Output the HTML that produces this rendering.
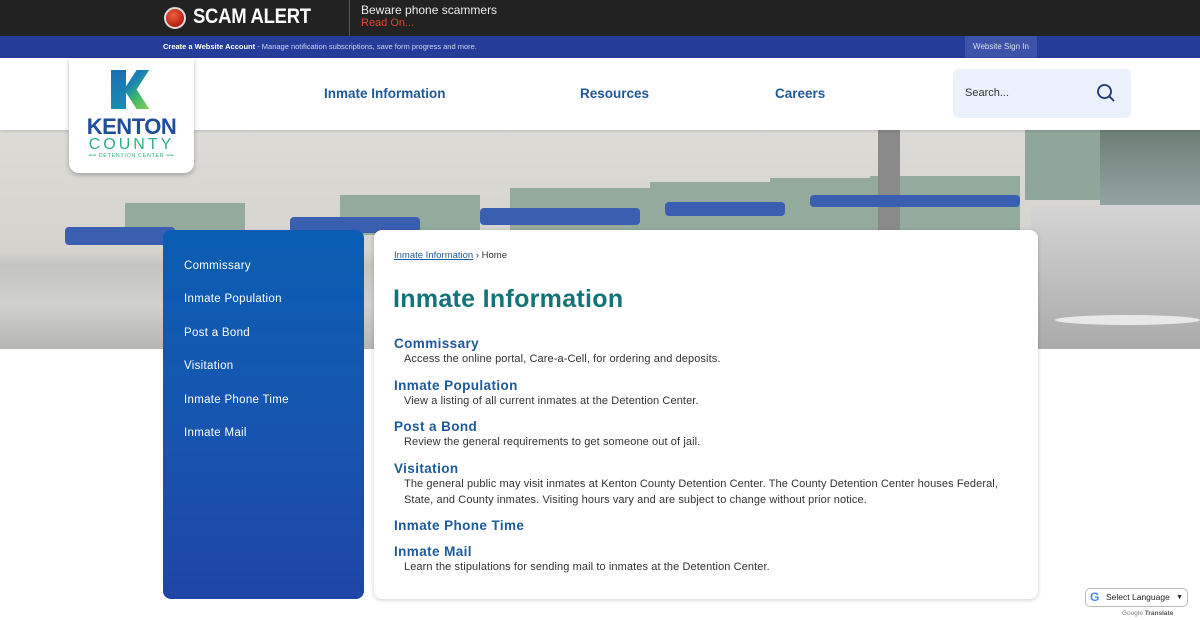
<!DOCTYPE html>
<html><head><meta charset="utf-8"><style>
*{margin:0;padding:0;box-sizing:border-box}
body{width:1200px;height:620px;overflow:hidden;background:#fff;font-family:"Liberation Sans",sans-serif;position:relative}
.abs{position:absolute}
#top{left:0;top:0;width:1200px;height:36px;background:#222}
#acct{left:0;top:36px;width:1200px;height:22px;background:#263c9a}
#hero{left:0;top:130px;width:1200px;height:219px;overflow:hidden;background:linear-gradient(180deg,#dcdbd6 0%,#d4d3ce 55%,#c4c4c0 62%,#d0d0cd 80%,#b5b5b2 100%)}
.g{position:absolute;background:#93aa9d}
.b{position:absolute;background:#3a5fb0;border-radius:4px}
.side a{display:block;color:#fff;font-size:11.5px;position:absolute;left:21px;letter-spacing:.3px}
h3{position:absolute;left:20px;color:#1e5a99;font-size:13.5px;font-weight:bold;letter-spacing:.4px}
.d{position:absolute;left:30px;color:#333;font-size:11px;line-height:15.5px;width:610px;letter-spacing:.1px}
</style></head><body>
<div class="abs" id="top">
  <div class="abs" style="left:164px;top:7px;width:22px;height:22px;border-radius:50%;background:radial-gradient(circle at 40% 35%,#f06040,#b81f10 70%);border:2px solid #ddd"></div>
  <div class="abs" style="left:193px;top:5px;color:#fff;font-size:21px;font-weight:bold;letter-spacing:-.3px;transform:scaleX(.88);transform-origin:left">SCAM ALERT</div>
  <div class="abs" style="left:349px;top:0;width:1px;height:36px;background:#555"></div>
  <div class="abs" style="left:361px;top:3px;color:#eee;font-size:12px">Beware phone scammers</div>
  <div class="abs" style="left:361px;top:17px;color:#e0462a;font-size:11px">Read On...</div>
</div>
<div class="abs" id="acct">
  <div class="abs" style="left:163px;top:6px;color:#fff;font-size:7.5px"><b>Create a Website Account</b><span style="color:#cfd6ee"> - Manage notification subscriptions, save form progress and more.</span></div>
  <div class="abs" style="left:965px;top:0;width:72px;height:22px;background:#3d52a8;color:#dde;font-size:8px;line-height:22px;text-align:center">Website Sign In</div>
</div>
<div class="abs" id="hero">
  <div class="g" style="left:125px;top:73px;width:120px;height:40px"></div>
  <div class="g" style="left:340px;top:65px;width:140px;height:40px"></div>
  <div class="g" style="left:510px;top:58px;width:155px;height:45px"></div>
  <div class="g" style="left:650px;top:52px;width:160px;height:50px"></div>
  <div class="g" style="left:770px;top:48px;width:155px;height:55px"></div>
  <div class="g" style="left:870px;top:46px;width:150px;height:55px"></div>
  <div class="g" style="left:1025px;top:0;width:75px;height:70px;background:#8fa79b"></div>
  <div class="abs" style="left:1100px;top:0;width:100px;height:219px;background:linear-gradient(180deg,#6d7e76,#9aa 40%,#bbb)"></div>
  <div class="abs" style="left:878px;top:0;width:22px;height:100px;background:#8a8a8a"></div>
  <div class="b" style="left:65px;top:97px;width:110px;height:18px"></div>
  <div class="b" style="left:290px;top:87px;width:130px;height:16px"></div>
  <div class="b" style="left:480px;top:78px;width:160px;height:17px"></div>
  <div class="b" style="left:665px;top:72px;width:120px;height:14px"></div>
  <div class="b" style="left:810px;top:65px;width:210px;height:12px"></div>
  <div class="abs" style="left:1030px;top:75px;width:170px;height:144px;background:linear-gradient(180deg,#d5d5d5,#aaa)"></div>
  <div class="abs" style="left:1055px;top:185px;width:145px;height:10px;background:#e8e8e8;border-radius:50%"></div>
</div>
<div class="abs" style="left:0;top:58px;width:1200px;height:72px;background:#fff;box-shadow:0 1px 3px rgba(0,0,0,.15)"></div>
<div class="abs" style="left:69px;top:58px;width:125px;height:115px;background:#fff;border-radius:0 0 10px 10px;box-shadow:0 2px 5px rgba(0,0,0,.25)">
  <div class="abs" style="left:42px;top:12px;width:15px;height:39px;background:linear-gradient(#1b6fb5,#1a8cb0)"></div>
  <div class="abs" style="left:55px;top:12px;width:28px;height:39px;background:linear-gradient(135deg,#1a7fb8 30%,#3fb86b 60%,#8cd04a);clip-path:polygon(0 50%,45% 0,90% 0,45% 50%,90% 100%,45% 100%)"></div>
  <div class="abs" style="left:0;width:125px;top:56px;text-align:center;color:#1f4e9a;font-weight:bold;font-size:22px;letter-spacing:-.5px">KENTON</div>
  <div class="abs" style="left:0;width:125px;top:78px;text-align:center;color:#2fb27a;font-size:16px;letter-spacing:3px">COUNTY</div>
  <div class="abs" style="left:0;width:125px;top:95px;text-align:center;color:#2fb27a;font-size:5.5px;letter-spacing:.6px">━━ DETENTION CENTER ━━</div>
</div>
<div class="abs" style="left:324px;top:86px;color:#1e5a99;font-size:13.5px;font-weight:bold">Inmate Information</div>
<div class="abs" style="left:580px;top:86px;color:#1e5a99;font-size:13.5px;font-weight:bold">Resources</div>
<div class="abs" style="left:775px;top:86px;color:#1e5a99;font-size:13.5px;font-weight:bold">Careers</div>
<div class="abs" style="left:953px;top:69px;width:178px;height:49px;background:#eaf1fa;border-radius:6px">
  <div class="abs" style="left:12px;top:18px;color:#333;font-size:11px">Search...</div>
  <svg class="abs" style="left:143px;top:14px" width="20" height="20" viewBox="0 0 20 20"><circle cx="8.5" cy="8.5" r="6.5" fill="none" stroke="#1d3470" stroke-width="1.8"/><path d="M13.3 13.3L18 18" stroke="#1d3470" stroke-width="1.8"/></svg>
</div>
<div class="abs side" style="left:163px;top:230px;width:201px;height:369px;border-radius:8px;background:linear-gradient(180deg,#0a5db3 0%,#1656b0 50%,#1f45a8 100%)">
  <a style="top:30px">Commissary</a><a style="top:63px">Inmate Population</a><a style="top:97px">Post a Bond</a><a style="top:130px">Visitation</a><a style="top:164px">Inmate Phone Time</a><a style="top:197px">Inmate Mail</a>
</div>
<div class="abs" style="left:374px;top:230px;width:664px;height:369px;background:#fff;border-radius:8px;box-shadow:0 1px 4px rgba(0,0,0,.2)">
  <div class="abs" style="left:20px;top:20px;font-size:9.5px;color:#333"><span style="color:#1e5a99;text-decoration:underline">Inmate Information</span> › Home</div>
  <div class="abs" style="left:19px;top:55px;color:#137477;font-size:25px;font-weight:bold;letter-spacing:.3px">Inmate Information</div>
  <h3 style="top:106px">Commissary</h3><div class="d" style="top:122px">Access the online portal, Care-a-Cell, for ordering and deposits.</div>
  <h3 style="top:148px">Inmate Population</h3><div class="d" style="top:164px">View a listing of all current inmates at the Detention Center.</div>
  <h3 style="top:189px">Post a Bond</h3><div class="d" style="top:205px">Review the general requirements to get someone out of jail.</div>
  <h3 style="top:231px">Visitation</h3><div class="d" style="top:247px">The general public may visit inmates at Kenton County Detention Center. The County Detention Center houses Federal, State, and County inmates. Visiting hours vary and are subject to change without prior notice.</div>
  <h3 style="top:288px">Inmate Phone Time</h3>
  <h3 style="top:314px">Inmate Mail</h3><div class="d" style="top:330px">Learn the stipulations for sending mail to inmates at the Detention Center.</div>
</div>
<div class="abs" style="left:1085px;top:588px;width:103px;height:19px;border:1px solid #bbb;border-radius:5px;background:#fff;font-size:8.5px;color:#222;line-height:17px;padding-left:20px">Select Language <span style="position:absolute;right:4px;font-size:7px">▼</span>
  <span style="position:absolute;left:4px;top:0;font-weight:bold;font-size:12px;color:#4285f4">G</span></div>
<div class="abs" style="left:1122px;top:610px;font-size:6.5px;color:#555"><span style="color:#888">Google</span> <b>Translate</b></div>
</body></html>
